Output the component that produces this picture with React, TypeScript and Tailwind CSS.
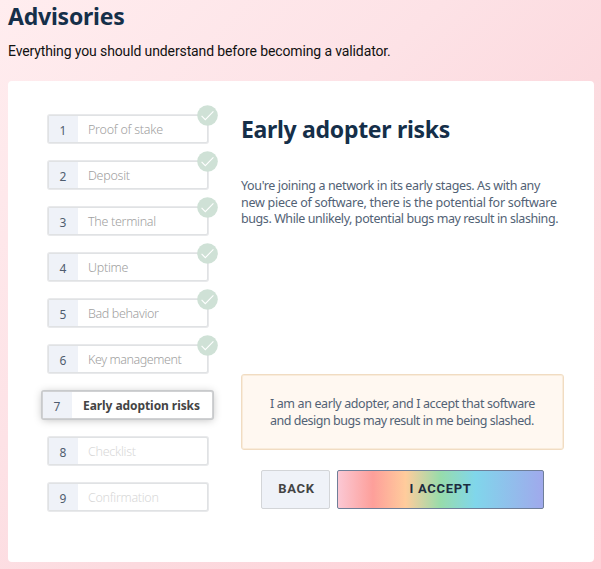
const steps = [
  { label: 'Proof of stake', tracking: 'tracking-[-0.24px]' },
  { label: 'Deposit', tracking: 'tracking-[-0.27px]' },
  { label: 'The terminal', tracking: 'tracking-[-0.3px]' },
  { label: 'Uptime', tracking: 'tracking-[-0.27px]' },
  { label: 'Bad behavior', tracking: 'tracking-[-0.37px]' },
  { label: 'Key management', tracking: 'tracking-[-0.42px]' },
  { label: 'Early adoption risks', tracking: 'tracking-[-0.07px]' },
  { label: 'Checklist', tracking: 'tracking-[-0.27px]' },
  { label: 'Confirmation', tracking: 'tracking-[-0.3px]' },
];

const ACTIVE = 6;

function Check() {
  return (
    <svg className="absolute -top-[11px] -right-[11px] size-[21px]" viewBox="0 0 21 21" fill="none">
      <circle cx="10.5" cy="10.5" r="10.3" fill="#cfe1d6" />
      <path d="M4.6 10.8 8.3 14.6 16.4 6.4" stroke="#fff" strokeWidth="1.1" />
    </svg>
  );
}

function Step({ index }: { index: number }) {
  const { label, tracking } = steps[index];
  const active = index === ACTIVE;
  const done = index < ACTIVE;
  return (
    <li
      className={
        'relative flex h-[28px] rounded-[2px] border bg-white ' +
        (active
          ? '-ml-[5px] w-[171px] border-[#d0d1d3] shadow-[0_0_0_1px_#c8cacc,0_1px_8px_rgba(0,0,0,0.26)]'
          : 'ml-px w-[160px] border-[#e0e2e4] shadow-[0_0_0_1px_#e8e9eb]')
      }
    >
      <span className="flex w-[29px] shrink-0 items-center justify-center bg-[#eff2f8] pt-[4px] pr-[1px] text-[12px] text-[#4f5d6f]">
        {index + 1}
      </span>
      <span
        className={
          'flex items-center whitespace-nowrap pt-[2px] ' +
          tracking +
          ' ' +
          (active
            ? 'pl-[11px] text-[12px] font-bold text-[#444]'
            : done
              ? 'pl-[10px] text-[12.5px] font-light text-[#a0a0a0]'
              : 'pl-[10px] text-[12.5px] font-light text-[#d8d8d8]')
        }
      >
        {label}
      </span>
      {done && <Check />}
    </li>
  );
}

export default function App() {
  return (
    <div className="h-[569px] w-[601px] overflow-hidden bg-[linear-gradient(135deg,#ffedef_0%,#fde2e6_38%,#fcd9de_60%,#ffd0d7_100%)] px-2 font-['Noto_Sans',sans-serif]">
      <h1 className="h-[41px] text-[23px] leading-[32px] font-bold tracking-[-0.22px] text-[#152f49]">
        <span>Advisories</span>
      </h1>
      <p className="h-[40px] font-['Roboto',sans-serif] text-[14px] leading-[20px] tracking-[-0.12px] text-[#111]">
        <span>Everything you should understand before becoming a validator.</span>
      </p>
      <main className="flex h-[481px] w-[586px] rounded-[4px] bg-white pl-[39px]">
        <ol className="flex w-[194px] shrink-0 flex-col gap-[18px] pt-[34px]">
          {steps.map((s, i) => (
            <Step key={s.label} index={i} />
          ))}
        </ol>
        <section className="flex w-[323px] flex-col pt-[33px]">
          <h2 className="h-[63px] whitespace-nowrap text-[23px] leading-[30px] font-bold tracking-[-0.3px] text-[#152f49]">
            <span>Early adopter risks</span>
          </h2>
          <p className="h-[196px] pt-px whitespace-nowrap text-[12.5px] leading-[16.5px] text-[#526275]">
            <span className="tracking-[-0.37px]">You're joining a network in its early stages. As with any</span>
            <br />
            <span className="tracking-[-0.27px]">new piece of software, there is the potential for software</span>
            <br />
            <span className="tracking-[-0.42px]">bugs. While unlikely, potential bugs may result in slashing.</span>
          </p>
          <div className="mt-px flex h-[76px] items-center rounded-[3px] border border-[#f1dcc2] bg-[#fff8f1] pl-[28px] shadow-[inset_0_0_0_1px_#f9ecdb]">
            <p className="pt-px whitespace-nowrap text-[12.5px] leading-[16.5px] text-[#526275]">
              <span className="tracking-[-0.38px]">I am an early adopter, and I accept that software</span>
              <br />
              <span className="tracking-[-0.48px]">and design bugs may result in me being slashed.</span>
            </p>
          </div>
          <div className="mt-[20px] flex gap-[7px] pl-[20px] font-['Roboto',sans-serif] text-[13px] font-bold">
            <button className="h-[39px] w-[69px] rounded-[2px] border border-[#d3d5d8] bg-[#eff2f8] pb-[2px] pl-[2px] tracking-[0.7px] text-[#444]">
              <span>BACK</span>
            </button>
            <button className="h-[39px] w-[207px] rounded-[2px] border border-[#6f7f99] bg-[linear-gradient(90deg,#fbc8d4_0%,#fd9f9a_17%,#ffcc9c_33%,#97dcab_50%,#80d6eb_67%,#a0a9ec_100%)] pb-[2px] tracking-[0.7px] text-[#1c2c3f]">
              <span>I ACCEPT</span>
            </button>
          </div>
        </section>
      </main>
    </div>
  );
}
